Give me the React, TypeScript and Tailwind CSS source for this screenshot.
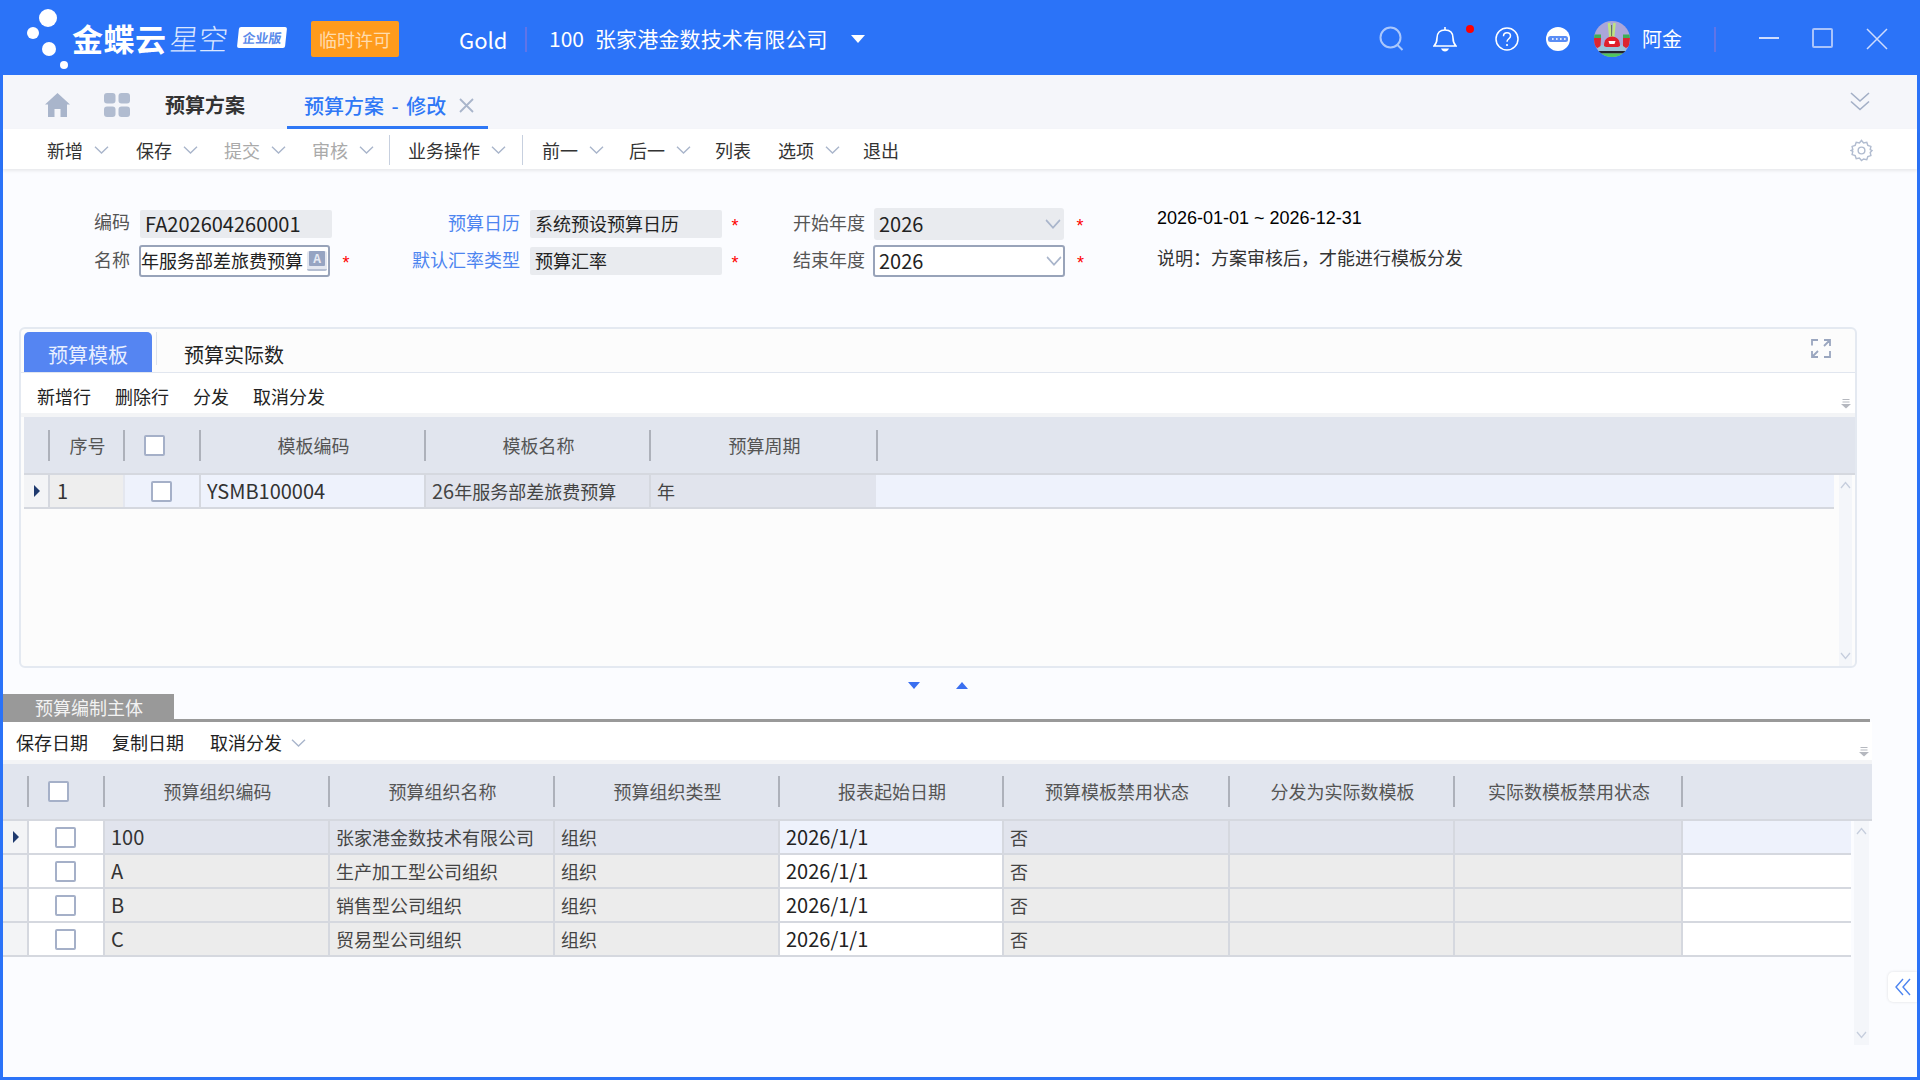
const menuItems = [
  { label: '新增', w: 'w-[89px]', arrow: true },
  { label: '保存', w: 'w-[88px]', arrow: true },
  { label: '提交', w: 'w-[88px]', arrow: true, off: true },
  { label: '审核', w: 'w-[77px]', arrow: true, off: true },
  { sep: true, w: 'w-[19px]', label: '' },
  { label: '业务操作', w: 'w-[114px]', arrow: true },
  { sep: true, w: 'w-[20px]', label: '' },
  { label: '前一', w: 'w-[87px]', arrow: true },
  { label: '后一', w: 'w-[86px]', arrow: true },
  { label: '列表', w: 'w-[63px]' },
  { label: '选项', w: 'w-[85px]', arrow: true },
  { label: '退出', w: 'w-[50px]' },
];

const topRows = [{ code: 'YSMB100004', prefix: '26', name: '年服务部差旅费预算', period: '年' }];

const orgRows = [
  { code: '100', name: '张家港金数技术有限公司' },
  { code: 'A', name: '生产加工型公司组织' },
  { code: 'B', name: '销售型公司组织' },
  { code: 'C', name: '贸易型公司组织' },
];

const orgHeads = [
  { label: '预算组织编码', w: 'w-[225px]' },
  { label: '预算组织名称', w: 'w-[225px]' },
  { label: '预算组织类型', w: 'w-[225px]' },
  { label: '报表起始日期', w: 'w-[224px]' },
  { label: '预算模板禁用状态', w: 'w-[226px]' },
  { label: '分发为实际数模板', w: 'w-[225px]' },
  { label: '实际数模板禁用状态', w: 'w-[228px]' },
];

function Chevron({ className = 'w-[15px] h-[8px]' }: { className?: string }) {
  return (
    <svg className={className} viewBox="0 0 15 8" fill="none" preserveAspectRatio="none">
      <path d="M1 .8l6.5 6.2L14 .8" stroke="#a9b5cb" strokeWidth="1.4" />
    </svg>
  );
}

function Check({ className = '' }: { className?: string }) {
  return <div className={`w-[21px] h-[21px] rounded-[2px] border-2 border-[#a5b0c8] bg-white ${className}`} />;
}

function Marker() {
  return (
    <svg width="6" height="12" viewBox="0 0 6 12">
      <path d="M0 0l6 6-6 6z" fill="#1f3a6e" />
    </svg>
  );
}

function OverflowIcon() {
  return (
    <svg width="10" height="10" viewBox="0 0 10 10">
      <path d="M1.5 .5h7M1.5 3h7" stroke="#b5b8bf" strokeWidth="1" />
      <path d="M0 5h10L5 9.5z" fill="#b5b8bf" />
    </svg>
  );
}

function ScrollBar({ className }: { className: string }) {
  return (
    <div className={`flex flex-col justify-between items-center py-[6px] bg-[#f4f6fa] ${className}`}>
      <svg width="11" height="8" viewBox="0 0 11 8" fill="none">
        <path d="M1 7l4.5-5.5L10 7" stroke="#c6cedd" strokeWidth="1.3" />
      </svg>
      <svg width="11" height="8" viewBox="0 0 11 8" fill="none">
        <path d="M1 1l4.5 5.5L10 1" stroke="#c6cedd" strokeWidth="1.3" />
      </svg>
    </div>
  );
}

function Logo() {
  return (
    <div className="flex items-center h-[75px] -mt-[3px]">
      <svg className="w-[72px] h-[75px] shrink-0" viewBox="0 0 72 75">
        <circle cx="48" cy="18" r="9" fill="#fff" />
        <circle cx="33" cy="33" r="6" fill="#fff" />
        <circle cx="49" cy="49" r="7" fill="#fff" />
        <circle cx="64" cy="65" r="4" fill="#fff" />
      </svg>
      <span className="text-[31px] leading-none font-bold text-white tracking-[0.5px]">金蝶云</span>
      <span className="ml-[3px] text-[29px] leading-none font-light text-[#dbe7ff] -skew-x-6">星空</span>
      <div className="ml-[10px] w-[48px] h-[21px] -skew-x-6 rounded-[2px] bg-white flex items-center justify-center">
        <span className="text-[13px] leading-none font-bold text-[#5b8bea] whitespace-nowrap">企业版</span>
      </div>
    </div>
  );
}

function Avatar() {
  return (
    <svg width="36" height="36" viewBox="0 0 36 36">
      <defs>
        <clipPath id="av">
          <circle cx="18" cy="18" r="18" />
        </clipPath>
      </defs>
      <g clipPath="url(#av)">
        <rect width="36" height="36" fill="#aaa6da" />
        <path d="M5 24h25l3 7H3z" fill="#9cc4d8" />
        <rect y="30" width="36" height="2.5" fill="#23232c" />
        <rect y="32.5" width="36" height="3.5" fill="#4fc75d" />
        <path d="M15 2l1.4 14M20.5 2l-1.4 14" stroke="#bfe481" strokeWidth="2.6" />
        <path d="M17.6 4v11" stroke="#4b5a3a" strokeWidth=".8" />
        <path d="M10 25c0-6 3-9.500 8-9.500s8 3.500 8 9.500l-2 1H12z" fill="#e01f2b" />
        <path d="M14.500 20h7l-1 3h-5z" fill="#fff" />
        <path d="M0 17l3.500-2 3.500 2-.5 8-3 2-3.500-2z" fill="#dc2630" />
        <path d="M29 17l3.500-2 3.500 2-.5 8-3.500 2-3-2z" fill="#dc2630" />
        <path d="M0 13.500h7V17H0zM29 13.500h7V17h-7z" fill="#3fae55" />
      </g>
    </svg>
  );
}

function TopBar() {
  return (
    <header className="h-[75px] shrink-0 pt-[3px] flex items-center text-white">
      <div className="w-[311px] h-full">
        <Logo />
      </div>
      <div className="w-[88px] h-[36px] rounded-[2px] bg-[#ff9b1c] flex items-center justify-center text-[18px] text-[#ffdcae]">
        临时许可
      </div>
      <span className="ml-[60px] w-[66px] text-[22px]">Gold</span>
      <div className="w-[2px] h-[25px] bg-[#5f74e8]" />
      <span className="ml-[22px] text-[21px]">100</span>
      <span className="ml-[11px] text-[21px] tracking-[0.15px]">张家港金数技术有限公司</span>
      <svg className="ml-[23px]" width="14" height="8" viewBox="0 0 14 8">
        <path d="M0 0h14L7 8z" fill="#fff" />
      </svg>
      <div className="flex-1" />
      <svg width="26" height="26" viewBox="0 0 26 26" fill="none" className="opacity-60">
        <circle cx="11.5" cy="11.5" r="10" stroke="#fff" strokeWidth="2" />
        <path d="M18.5 19l5 5" stroke="#fff" strokeWidth="2" />
      </svg>
      <svg className="ml-[28px]" width="24" height="26" viewBox="0 0 24 26" fill="none">
        <path d="M1 20c2-2 3-4 3-8 0-5 3-8 8-8s8 3 8 8c0 4 1 6 3 8z" stroke="#fff" strokeWidth="1.6" />
        <path d="M12 1v3" stroke="#fff" strokeWidth="1.6" />
        <path d="M8 22.500h8c-1 2-2 3-4 3s-3-1-4-3z" fill="#fff" />
      </svg>
      <div className="ml-[-2px] mb-[20px] w-[8px] h-[8px] rounded-full bg-[#f00] relative left-[11px]" />
      <svg className="ml-[32px]" width="24" height="24" viewBox="0 0 24 24" fill="none">
        <circle cx="12" cy="12" r="11" stroke="#fff" strokeWidth="1.500" />
        <path d="M8.500 9.200c0-2 1.500-3.400 3.500-3.400s3.500 1.300 3.500 3.200c0 2.800-3.500 2.800-3.500 5.800" stroke="#fff" strokeWidth="1.500" />
        <circle cx="12" cy="18" r="1.100" fill="#fff" />
      </svg>
      <svg className="ml-[27px]" width="24" height="24" viewBox="0 0 24 24">
        <circle cx="12" cy="12" r="12" fill="#fff" />
        <rect x="2" y="9" width="20" height="6" rx="2.500" fill="#5a8df5" />
        <path d="M6 11h1.600v2H6zM10 11h1.600v2H10zM14 11h1.600v2H14zM18 11h1.600v2H18z" fill="#fff" opacity=".8" />
      </svg>
      <div className="ml-[24px] w-[36px] h-[36px]">
        <Avatar />
      </div>
      <span className="ml-[12px] text-[20px]">阿金</span>
      <div className="ml-[32px] w-[2px] h-[25px] bg-[#5f74e8]" />
      <svg className="ml-[43px] mb-[2px]" width="20" height="4" viewBox="0 0 20 4">
        <path d="M0 2h20" stroke="#cfdcfd" strokeWidth="2" />
      </svg>
      <div className="ml-[33px] w-[21px] h-[20px] border-2 border-[#a9c3fb] rounded-[2px] mb-[2px]" />
      <svg className="ml-[33px] mr-[32px] mb-[1px]" width="22" height="22" viewBox="0 0 22 22" fill="none">
        <path d="M1 1l20 20M21 1L1 21" stroke="#cfdcfd" strokeWidth="1.500" />
      </svg>
    </header>
  );
}

function TabBar() {
  return (
    <div className="h-[54px] shrink-0 bg-[#f5f6fa] flex items-end">
      <div className="h-full pt-[6px] flex items-center pl-[42px]">
        <svg width="25" height="24" viewBox="0 0 25 24">
          <path d="M12.500 0L25 11.500h-3V24h-6.500v-8h-6v8H3V11.500H0z" fill="#a9b5cb" />
        </svg>
        <svg className="ml-[34px]" width="26" height="24" viewBox="0 0 26 24">
          <rect width="11.500" height="10.500" rx="3" fill="#b1bcd0" />
          <rect x="14.500" width="11.500" height="10.500" rx="3" fill="#b1bcd0" />
          <rect y="13.500" width="11.500" height="10.500" rx="3" fill="#b1bcd0" />
          <rect x="14.500" y="13.500" width="11.500" height="10.500" rx="3" fill="#b1bcd0" />
        </svg>
        <span className="ml-[35px] text-[20px] font-bold text-[#333]">预算方案</span>
      </div>
      <div className="ml-[42px] w-[201px] h-full pt-[10px] border-b-[3px] border-[#2f78f6] flex items-center pl-[17px]">
        <span className="text-[20px] font-medium text-[#2f78f6] [word-spacing:3px]">预算方案 - 修改</span>
        <svg className="ml-[13px]" width="15" height="15" viewBox="0 0 15 15" fill="none">
          <path d="M1 1l13 13M14 1L1 14" stroke="#a9b5cb" strokeWidth="1.800" />
        </svg>
      </div>
      <div className="flex-1" />
      <svg className="mr-[47px] mb-[18px]" width="20" height="19" viewBox="0 0 20 19" fill="none">
        <path d="M1 1l9 8 9-8M1 9.500l9 8 9-8" stroke="#a3afc6" strokeWidth="1.600" />
      </svg>
    </div>
  );
}

function MenuBar() {
  return (
    <div className="h-[40px] shrink-0 bg-white flex items-center pl-[44px] pt-[2px] shadow-[0_2px_3px_rgba(0,0,0,0.08)] relative text-[18px] text-[#333]">
      {menuItems.map((it, i) =>
        it.sep ? (
          <div key={i} className={`${it.w} h-[30px]`}>
            <div className="w-[1px] h-full bg-[#c7d0df]" />
          </div>
        ) : (
          <div key={i} className={`${it.w} shrink-0 flex items-center gap-[11px]`}>
            <span className={it.off ? 'text-[#aaa]' : ''}>{it.label}</span>
            {it.arrow && <Chevron />}
          </div>
        ),
      )}
      <div className="flex-1" />
      <svg className="mr-[44px]" width="23" height="23" viewBox="0 0 24 24" fill="none">
        <path
          d="M12 1.500l2.200 2.600 3.300-.7 1.100 3.200 3.200 1.100-.7 3.300 1.900 1-1.900 2 .7 3.300-3.200 1.100-1.100 3.200-3.300-.7L12 22.500l-2.200-2.600-3.300.7-1.100-3.200-3.200-1.100.7-3.300L1 12l1.900-1-.7-3.300 3.200-1.100 1.100-3.200 3.300.7z"
          stroke="#b1bcd0"
          strokeWidth="1.500"
        />
        <circle cx="12" cy="12" r="3.500" stroke="#b1bcd0" strokeWidth="1.500" />
      </svg>
    </div>
  );
}

function Star({ w }: { w: string }) {
  return (
    <div className={`${w} shrink-0 flex justify-center items-center text-[18px] leading-none text-[#f00] pt-[4px] font-['Liberation_Sans',sans-serif]`}>
      *
    </div>
  );
}

function FormPanel() {
  return (
    <div className="h-[158px] shrink-0 pt-[36px] text-[18px] text-[#222]">
      <div className="h-[37px] flex items-center">
        <div className="w-[127px] mr-[10px] mb-[4px] text-right text-[#555]">编码</div>
        <div className="w-[192px] h-[28px] rounded-[2px] bg-[#e9ebef] pl-[5px] flex items-center text-[20px]">FA202604260001</div>
        <div className="w-[28px] shrink-0" />
        <div className="w-[160px] mr-[10px] mb-[2px] text-right text-[#4d85f0]">预算日历</div>
        <div className="w-[192px] h-[28px] rounded-[2px] bg-[#e9ebef] pl-[5px] flex items-center">系统预设预算日历</div>
        <Star w="w-[26px]" />
        <div className="w-[117px] mr-[9px] mb-[2px] text-right text-[#555]">开始年度</div>
        <div className="w-[190px] h-[32px] rounded-[3px] bg-[#e9ebef] pl-[5px] pr-[3px] flex items-center justify-between text-[20px]">
          2026
          <Chevron className="w-[16px] h-[10px]" />
        </div>
        <Star w="w-[32px]" />
        <div className="ml-[61px] font-['Liberation_Sans',sans-serif] text-black mb-[10px]">2026-01-01 ~ 2026-12-31</div>
      </div>
      <div className="h-[37px] flex items-center">
        <div className="w-[127px] mr-[9px] mb-[2px] text-right text-[#555]">名称</div>
        <div className="w-[191px] mr-[2px] h-[32px] rounded-[3px] border-2 border-[#98a3b9] bg-white flex items-center justify-between pr-[1px]">
          <span>年服务部差旅费预算</span>
          <div className="w-[20px] h-[20px] rounded-[2px] bg-[#e3e7f0] border-b-2 border-[#b4bed2] flex items-start justify-center">
            <div className="w-[16px] h-[15px] rounded-[1px] bg-[#96a4c2] flex items-center justify-center text-[12px] leading-none font-bold text-[#e6eaf3]">A</div>
          </div>
        </div>
        <Star w="w-[28px]" />
        <div className="w-[160px] mr-[10px] mb-[2px] text-right text-[#4d85f0]">默认汇率类型</div>
        <div className="w-[192px] h-[28px] rounded-[2px] bg-[#e9ebef] pl-[5px] flex items-center">预算汇率</div>
        <Star w="w-[26px]" />
        <div className="w-[117px] mr-[8px] mb-[2px] text-right text-[#555]">结束年度</div>
        <div className="w-[192px] h-[32px] rounded-[3px] border-2 border-[#98a3b9] bg-white pl-[4px] pr-[1px] flex items-center justify-between text-[20px]">
          2026
          <Chevron className="w-[16px] h-[10px]" />
        </div>
        <Star w="w-[31px]" />
        <div className="ml-[61px] text-[#333] mb-[6px]">说明：方案审核后，才能进行模板分发</div>
      </div>
    </div>
  );
}

function HeadCell({ w, label, children }: { w: string; label?: string; children?: React.ReactNode }) {
  return (
    <div className={`${w} shrink-0 h-[31px] pl-[2px] border-l-2 border-[#adb1ba] flex items-center justify-center text-[#555]`}>
      {label}
      {children}
    </div>
  );
}

function TemplatePanel() {
  return (
    <div className="ml-[16px] w-[1838px] h-[341px] shrink-0 rounded-[6px] border-2 border-[#e4e9f1] bg-[#fcfcfc] flex flex-col text-[18px] text-[#333]">
      <div className="h-[44px] shrink-0 pt-[3px] pl-[3px] border-b border-[#e1e6ef] flex items-stretch">
        <div className="w-[128px] pt-[6px] rounded-t-[5px] bg-[#5585f2] flex items-center justify-center text-[20px] text-[#e8efff]">预算模板</div>
        <div className="ml-[4px] w-[1px] h-[33px] bg-[#dfe3ea]" />
        <div className="ml-[27px] pt-[6px] flex items-center text-[20px] text-[#222]">预算实际数</div>
        <div className="flex-1" />
        <svg className="mr-[24px] self-center mb-[8px]" width="20" height="19" viewBox="0 0 20 19" fill="none">
          <path d="M1 6.500V1h6M13 1h6v6M19 1l-6 6M1 12v6h6M1 18l6-6M19 12v6h-6" stroke="#9aa6bf" strokeWidth="1.800" />
        </svg>
      </div>
      <div className="h-[40px] shrink-0 bg-white pl-[16px] pt-[7px] flex items-center text-[#222]">
        <span className="w-[78px]">新增行</span>
        <span className="w-[78px]">删除行</span>
        <span className="w-[60px]">分发</span>
        <span>取消分发</span>
        <div className="flex-1" />
        <div className="mr-[4px] self-end mb-[4px] flex">
          <OverflowIcon />
        </div>
      </div>
      <div className="h-[4px] shrink-0 bg-[#f3f4f6]" />
      <div className="ml-[3px] h-[56px] shrink-0 bg-[#e1e5ee] border-b-2 border-[#d5d8df] box-content flex items-center">
        <div className="w-[24px] shrink-0" />
        <HeadCell w="w-[75px]" label="序号" />
        <HeadCell w="w-[76px]">
          <Check className="mr-[18px]" />
        </HeadCell>
        <HeadCell w="w-[225px]" label="模板编码" />
        <HeadCell w="w-[225px]" label="模板名称" />
        <HeadCell w="w-[227px]" label="预算周期" />
        <div className="w-[2px] h-[31px] bg-[#adb1ba]" />
      </div>
      <div className="ml-[3px] flex-1 flex min-h-0">
        <div className="w-[1810px]">
          {topRows.map((r) => (
            <div key={r.code} className="h-[34px] border-b-2 border-[#d5d8df] flex bg-[#eef2fc]">
              <div className="w-[24px] shrink-0 bg-[#f3f4f6] flex items-center pl-[10px]">
                <Marker />
              </div>
              <div className="w-[75px] shrink-0 border-l-2 border-[#d5d8df] bg-[#eeeeee] pl-[7px] flex items-center text-[20px]">1</div>
              <div className="w-[76px] shrink-0 flex items-center justify-center border-l-2 border-[#e4e7ef]">
                <Check className="mr-[1px]" />
              </div>
              <div className="w-[225px] shrink-0 border-l-2 border-[#d5d8df] pl-[6px] flex items-center text-[20px]">{r.code}</div>
              <div className="w-[225px] shrink-0 border-l-2 border-[#d5d8df] bg-[#e1e4ed] pl-[6px] flex items-center text-[#444]">
                <span className="text-[20px]">{r.prefix}</span>
                {r.name}
              </div>
              <div className="w-[227px] shrink-0 border-l-2 border-[#d5d8df] bg-[#e1e4ed] pl-[6px] flex items-center text-[#444]">{r.period}</div>
            </div>
          ))}
        </div>
        <ScrollBar className="ml-[5px] w-[13px] h-full" />
      </div>
    </div>
  );
}

function Splitter() {
  return (
    <div className="h-[26px] shrink-0 flex items-start pt-[14px] pl-[905px]">
      <svg width="12" height="7" viewBox="0 0 12 7">
        <path d="M0 0h12L6 7z" fill="#3a6ff0" />
      </svg>
      <svg className="ml-[36px]" width="12" height="7" viewBox="0 0 12 7">
        <path d="M0 7h12L6 0z" fill="#3a6ff0" />
      </svg>
    </div>
  );
}

function OrgPanel() {
  return (
    <div className="flex-1 min-h-0 flex flex-col text-[18px] text-[#333]">
      <div className="w-[1867px] h-[28px] shrink-0 border-b-[3px] border-[#999999] box-border">
        <div className="w-[171px] h-[25px] bg-[#999999] pl-[32px] pt-[2px] flex items-center text-[#f2f2f2]">预算编制主体</div>
      </div>
      <div className="w-[1869px] h-[38px] shrink-0 bg-white pl-[13px] pt-[3px] flex items-center text-[#222]">
        <span className="w-[96px]">保存日期</span>
        <span className="w-[98px]">复制日期</span>
        <span>取消分发</span>
        <Chevron className="ml-[9px] w-[15px] h-[8px]" />
        <div className="flex-1" />
        <div className="mr-[3px] self-end mb-[3px] flex">
          <OverflowIcon />
        </div>
      </div>
      <div className="w-[1869px] h-[4px] shrink-0 bg-[#f3f4f6]" />
      <div className="w-[1869px] h-[55px] shrink-0 bg-[#e1e5ee] border-b-2 border-[#d5d8df] box-content flex items-center">
        <div className="w-[24px] shrink-0" />
        <HeadCell w="w-[76px]">
          <Check className="mr-[18px]" />
        </HeadCell>
        {orgHeads.map((h) => (
          <HeadCell key={h.label} w={h.w} label={h.label} />
        ))}
        <div className="w-[2px] h-[31px] bg-[#adb1ba]" />
      </div>
      <div className="h-[224px] shrink-0 flex">
        <div className="w-[1848px]">
          {orgRows.map((r, i) => {
            const gray = i === 0 ? 'bg-[#e1e4ed]' : 'bg-[#ececec]';
            const light = i === 0 ? 'bg-[#eef2fc]' : 'bg-white';
            const cell = 'shrink-0 border-l-2 border-[#d5d8df] pl-[6px] flex items-center';
            return (
              <div key={r.code} className="h-[34px] border-b-2 border-[#d5d8df] flex">
                <div className="w-[24px] shrink-0 bg-[#f3f4f6] flex items-center pl-[10px]">
                  {i === 0 && <Marker />}
                </div>
                <div className="w-[76px] shrink-0 bg-white border-l-2 border-[#d5d8df] flex items-center justify-center">
                  <Check className="mr-[1px]" />
                </div>
                <div className={`w-[225px] ${gray} ${cell} text-[20px]`}>{r.code}</div>
                <div className={`w-[225px] ${gray} ${cell} text-[#444]`}>{r.name}</div>
                <div className={`w-[225px] ${gray} ${cell} text-[#444]`}>组织</div>
                <div className={`w-[224px] ${light} ${cell} text-[#222] text-[20px]`}>2026/1/1</div>
                <div className={`w-[226px] ${gray} ${cell} text-[#444]`}>否</div>
                <div className={`w-[225px] ${gray} ${cell}`} />
                <div className={`w-[228px] ${gray} ${cell}`} />
                <div className={`flex-1 ${light} border-l-2 border-[#d5d8df]`} />
              </div>
            );
          })}
        </div>
        <ScrollBar className="ml-[3px] w-[15px] h-full" />
      </div>
    </div>
  );
}

export default function App() {
  return (
    <div className="relative w-[1920px] h-[1080px] overflow-hidden flex flex-col bg-[#2b73f8] font-['Noto_Sans_CJK_SC','Noto_Sans',sans-serif]">
      <TopBar />
      <main className="flex-1 min-h-0 mx-[3px] mb-[3px] bg-[#fbfcff] flex flex-col">
        <TabBar />
        <MenuBar />
        <FormPanel />
        <TemplatePanel />
        <Splitter />
        <OrgPanel />
      </main>
      <div className="absolute left-[1888px] top-[972px] w-[29px] h-[30px] rounded-l-[5px] bg-white shadow-[0_0_3px_rgba(0,0,0,0.12)] flex items-center justify-center">
        <svg width="18" height="18" viewBox="0 0 18 18" fill="none">
          <path d="M9 1L2 9l7 8M16 1L9 9l7 8" stroke="#4d85f0" strokeWidth="1.400" />
        </svg>
      </div>
    </div>
  );
}
